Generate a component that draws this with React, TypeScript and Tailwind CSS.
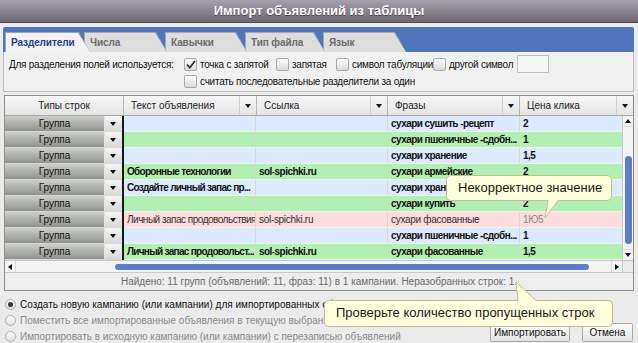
import React from "react";

const Tri = ({ dir = "down", color = "#111" }: { dir?: "down" | "up" | "left" | "right"; color?: string }) => {
  const pts =
    dir === "down" ? "0,0 6,0 3,4" : dir === "up" ? "0,4 6,4 3,0" : dir === "left" ? "4,0 4,6 0,3" : "0,0 0,6 4,3";
  const w = dir === "down" || dir === "up" ? 6 : 4;
  const h = dir === "down" || dir === "up" ? 4 : 6;
  return (
    <svg width={w} height={h} viewBox={`0 0 ${w} ${h}`} className="block">
      <polygon points={pts} fill={color} />
    </svg>
  );
};

const Check = ({ checked = false }: { checked?: boolean }) => (
  <div className="w-[13px] h-[13px] shrink-0 rounded-[2px] border border-[#a9a9a9] bg-gradient-to-b from-[#ffffff] to-[#dadada] flex items-center justify-center">
    {checked && (
      <svg width="10" height="9" viewBox="0 0 10 9">
        <path d="M1 4.5 L3.8 7.5 L9 1" stroke="#333" strokeWidth="1.8" fill="none" />
      </svg>
    )}
  </div>
);

const Radio = ({ on = false }: { on?: boolean }) => (
  <div className="w-[11px] h-[11px] shrink-0 rounded-full border border-[#b0b0b0] bg-gradient-to-b from-[#ffffff] to-[#dedede] flex items-center justify-center">
    {on && <div className="w-[5px] h-[5px] rounded-full bg-[#333]" />}
  </div>
);

type Row = {
  c: "blue" | "green" | "pink";
  text: string;
  link: string;
  phrase: string;
  price: string;
};

const rows: Row[] = [
  { c: "blue", text: "", link: "", phrase: "сухари сушить -рецепт", price: "2" },
  { c: "green", text: "", link: "", phrase: "сухари пшеничные -сдобн...", price: "1" },
  { c: "blue", text: "", link: "", phrase: "сухари хранение", price: "1,5" },
  { c: "green", text: "Оборонные технологии", link: "sol-spichki.ru", phrase: "сухари армейские", price: "2" },
  { c: "blue", text: "Создайте личный запас пр...", link: "", phrase: "сухари хранение", price: "1,5" },
  { c: "green", text: "", link: "", phrase: "сухари купить", price: "2" },
  { c: "pink", text: "Личный запас продовольствия", link: "sol-spichki.ru", phrase: "сухари фасованные", price: "1Ю5" },
  { c: "blue", text: "", link: "", phrase: "сухари пшеничные -сдобн...", price: "1" },
  { c: "green", text: "Личный запас продовольст...", link: "sol-spichki.ru", phrase: "сухари фасованные", price: "1,5" },
];

const rowBg = { blue: "bg-[#dbeafd]", green: "bg-[#b4efb2]", pink: "bg-[#fcdcdc]" };

const tabs = [
  { label: "Разделители", w: "w-[85px]", ml: "", active: true },
  { label: "Числа", w: "w-[83px]", ml: "-ml-[6px]", active: false },
  { label: "Кавычки", w: "w-[82px]", ml: "-ml-[2px]", active: false },
  { label: "Тип файла", w: "w-[80px]", ml: "-ml-[2px]", active: false },
  { label: "Язык", w: "w-[83px]", ml: "-ml-[2px]", active: false },
];

export default function App() {
  return (
    <div className="relative w-[638px] h-[343px] overflow-hidden bg-[#ebebeb] font-['Liberation_Sans',Arial,sans-serif] text-[10px] text-[#111]">
      {/* Title */}
      <div className="h-[23px] bg-gradient-to-b from-[#a7a0ad] to-[#6d6673] border-b border-[#4d4852] text-center text-white font-bold text-[13px] leading-[22px] [text-shadow:0_1px_1px_rgba(0,0,0,0.45)]">
        Импорт объявлений из таблицы
      </div>

      {/* Tabs panel */}
      <div className="mx-[3px] mt-[4px] w-[631px]">
        <div className="h-[25px] bg-[#5075bb] rounded-t-[2px] flex items-end pl-[2px]">
          {tabs.map((t, i) => (
            <div
              key={t.label}
              className={`${t.w} ${t.ml} h-[20px] relative [clip-path:polygon(0_0,calc(100%-11px)_0,100%_100%,0_100%)] ${t.active ? "bg-[#9aa5b8]" : "bg-[#a9a9a9]"} pt-[1px] pl-[1px]`}
              style={{ zIndex: t.active ? 10 : 5 - i }}
            >
              <div
                className={`h-full w-full [clip-path:polygon(0_0,calc(100%-12px)_0,100%_100%,0_100%)] ${t.active ? "bg-[#f3f3f3] text-[#1d3f8c]" : "bg-[#dedede] text-[#6b6b6b]"} font-bold text-[10px] pl-[5px] leading-[19px] tracking-[-0.1px]`}
              >
                {t.label}
              </div>
            </div>
          ))}
        </div>
        <div className="h-[40px] bg-[#f1f1f1] border border-t-0 border-[#bdbdbd] pl-[5px] pt-[3px] tracking-[-0.25px]">
          <div className="flex items-center h-[18px]">
            <span className="w-[175px] whitespace-nowrap">Для разделения полей используется:</span>
            <Check checked />
            <span className="ml-[3px] w-[76px] whitespace-nowrap">точка с запятой</span>
            <Check />
            <span className="ml-[3px] w-[44px] whitespace-nowrap">запятая</span>
            <Check />
            <span className="ml-[3px] w-[81px] whitespace-nowrap">символ табуляции</span>
            <Check />
            <span className="ml-[3px] w-[68px] whitespace-nowrap">другой символ</span>
            <div className="w-[32px] h-[18px] bg-[#f7f7f7] border border-[#bdbdbd]" />
          </div>
          <div className="flex items-center h-[17px] ml-[175px]">
            <Check />
            <span className="ml-[3px]">считать последовательные разделители за один</span>
          </div>
        </div>
      </div>

      {/* Table */}
      <div className="mx-[4px] mt-[3px] w-[630px] border border-[#8e8e8e] bg-white">
        {/* header */}
        <div className="flex h-[20px] bg-gradient-to-b from-[#f7f7f7] to-[#e4e4e4] border-b border-[#a8a8a8]">
          <div className="w-[119px] border-r border-[#b4b4b4] text-center leading-[19px] text-[#222]">Типы строк</div>
          {[
            ["Текст объявления", "w-[133px]"],
            ["Ссылка", "w-[131px]"],
            ["Фразы", "w-[132px]"],
            ["Цена клика", "flex-1"],
          ].map(([l, w], i) => (
            <div key={l} className={`${w} flex items-center ${i < 3 ? "border-r border-[#b4b4b4]" : ""}`}>
              <span className="pl-[7px] flex-1 text-[#222] whitespace-nowrap">{l}</span>
              <div className="w-[17px] h-full flex items-center justify-center border-l border-[#d0d0d0]">
                <Tri />
              </div>
            </div>
          ))}
        </div>

        {/* body */}
        <div className="flex">
          <div className="flex-1">
            {rows.map((r, i) => {
              const pink = r.c === "pink";
              const fw = pink ? "font-normal text-[#333] tracking-[-0.3px]" : "font-bold tracking-[-0.55px]";
              const first = pink ? "tracking-[-0.5px]" : "tracking-[-0.7px]";
              return (
                <div key={i} className="flex h-[16px]">
                  <div className="w-[117px] flex bg-[#e3e3e3] border-b border-[#d6d6d6]">
                    <div className="w-[99px] bg-gradient-to-b from-[#cdcfca] to-[#8f918c] text-center leading-[15px] text-[#111]">
                      Группа
                    </div>
                    <div className="ml-[1px] w-[16px] bg-gradient-to-b from-[#f6f6f6] to-[#d6d6d6] flex items-center justify-center">
                      <Tri />
                    </div>
                  </div>
                  <div className="w-[2px] bg-[#1a1a1a]" />
                  <div className={`flex-1 flex ${rowBg[r.c]} border-b border-[#eef3ee] ${fw}`}>
                    <div className={`w-[132px] pl-[3px] leading-[15px] border-r border-[#d2d8d2] whitespace-nowrap overflow-hidden ${first}`}>{r.text}</div>
                    <div className="w-[132px] pl-[3px] leading-[15px] border-r border-[#d2d8d2] whitespace-nowrap overflow-hidden">{r.link}</div>
                    <div className="w-[132px] pl-[3px] leading-[15px] border-r border-[#d2d8d2] whitespace-nowrap overflow-hidden">{r.phrase}</div>
                    <div className={`flex-1 pl-[3px] leading-[15px] whitespace-nowrap ${pink ? "text-[#8a8a8a]" : ""}`}>{r.price}</div>
                  </div>
                </div>
              );
            })}
          </div>
          {/* vertical scrollbar */}
          <div className="w-[11px] bg-[#f3f3f3] border-l border-[#c8c8c8] flex flex-col items-center">
            <div className="h-[11px] w-full flex items-center justify-center border-b border-[#d8d8d8]">
              <Tri dir="up" />
            </div>
            <div className="h-[29px]" />
            <div className="w-[7px] h-[88px] rounded-[4px] bg-[#5b7ec3]" />
            <div className="flex-1" />
            <div className="h-[11px] w-full flex items-center justify-center border-t border-[#d8d8d8]">
              <Tri dir="down" />
            </div>
          </div>
        </div>

        {/* horizontal scrollbar */}
        <div className="flex h-[12px] border-t border-[#c8c8c8] bg-[#f3f3f3]">
          <div className="w-[11px] flex items-center justify-center border-r border-[#d8d8d8]">
            <Tri dir="left" />
          </div>
          <div className="flex-1 flex items-center pl-[99px] pr-[22px]">
            <div className="h-[6px] flex-1 rounded-[3px] bg-[#5b7ec3]" />
          </div>
          <div className="w-[11px] flex items-center justify-center border-l border-[#d8d8d8]">
            <Tri dir="right" />
          </div>
          <div className="w-[11px] border-l border-[#c8c8c8] bg-[#ebebeb]" />
        </div>

        {/* status */}
        <div className="h-[18px] bg-[#ededed] border-t border-[#c8c8c8] text-center text-[#6b6b6b] leading-[17px]">
          Найдено: 11 групп (объявлений: 11, фраз: 11) в 1 кампании. Неразобранных строк: 1.
        </div>
      </div>

      {/* bottom */}
      <div className="flex items-end mx-[5px] mt-[5px]">
        <div className="flex-1 flex flex-col">
          <div className="flex items-center h-[16px]">
            <Radio on />
            <span className="ml-[4px] text-[#111] whitespace-nowrap">Создать новую кампанию (или кампании) для импортированных объявлений</span>
          </div>
          <div className="flex items-center h-[16px]">
            <Radio />
            <span className="ml-[4px] text-[#8a8a8a] whitespace-nowrap">Поместить все импортированные объявления в текущую выбранную кампанию</span>
          </div>
          <div className="flex items-center h-[16px]">
            <Radio />
            <span className="ml-[4px] text-[#8a8a8a] whitespace-nowrap">Импортировать в исходную кампанию (или кампании) с перезаписью объявлений</span>
          </div>
        </div>
        <div className="flex gap-[12px] mb-[2px] shrink-0">
          <button className="h-[19px] w-[80px] rounded-[2px] border border-[#a9a9a9] bg-gradient-to-b from-[#ffffff] to-[#e2e2e2] text-[10px] text-[#111]">
            Импортировать
          </button>
          <button className="h-[19px] w-[51px] rounded-[2px] border border-[#a9a9a9] bg-gradient-to-b from-[#ffffff] to-[#e2e2e2] text-[10px] text-[#111]">
            Отмена
          </button>
        </div>
      </div>

      {/* tooltip 1 */}
      <div className="absolute left-[446px] top-[175px] w-[168px] h-[45px]">
        <svg width="168" height="45" className="absolute inset-0">
          <path
            d="M4.5 0.5 H161.5 Q165.5 0.5 165.5 4.5 V21.5 Q165.5 25.5 161.5 25.5 H112 L99 43 L102 25.5 H4.5 Q0.5 25.5 0.5 21.5 V4.5 Q0.5 0.5 4.5 0.5 Z"
            fill="#ffffdc"
            stroke="#bdbd9c"
          />
        </svg>
        <div className="relative pl-[12px] h-[26px] leading-[26px] text-[13px] text-[#1a1a1a] whitespace-nowrap">Некорректное значение</div>
      </div>

      {/* tooltip 2 */}
      <div className="absolute left-[324px] top-[281px] w-[292px] h-[48px]">
        <svg width="292" height="48" className="absolute inset-0">
          <path
            d="M4.5 19.5 H194 L192 1 L212 19.5 H284.5 Q288.5 19.5 288.5 23.5 V41.5 Q288.5 45.5 284.5 45.5 H4.5 Q0.5 45.5 0.5 41.5 V23.5 Q0.5 19.5 4.5 19.5 Z"
            fill="#ffffdc"
            stroke="#bdbd9c"
          />
        </svg>
        <div className="relative pt-[19px] pl-[12px] h-[46px] leading-[26px] text-[13px] text-[#1a1a1a] whitespace-nowrap">
          Проверьте количество пропущенных строк
        </div>
      </div>
    </div>
  );
}
